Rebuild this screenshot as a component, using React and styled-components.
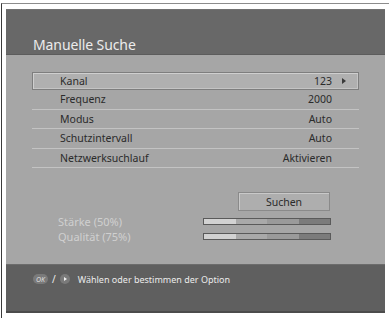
import React from "react";
import styled, { createGlobalStyle } from "styled-components";

const Global = createGlobalStyle`
  html, body { margin: 0; padding: 0; background: #ffffff; }
  body { font-family: "Noto Sans", "DejaVu Sans", Verdana, sans-serif; }
`;

const Frame = styled.div`
  width: 388px;
  height: 315px;
  margin-top: 3px;
  margin-left: 1px;
  border-top: 1px solid #8c8c8c;
  border-left: 1px solid #3a3a3a;
  padding: 5px 0 0 4px;
  box-sizing: border-box;
`;

const Screen = styled.div`
  width: 379px;
  height: 304px;
  display: flex;
  flex-direction: column;
  background: #a6a6a6;
  border-bottom: 2px solid #4c4c4c;
  box-sizing: border-box;
`;

const Header = styled.div`
  height: 46px;
  flex: none;
  background: #686868;
  border-top: 1px solid #727272;
  border-bottom: 1px solid #5c5c5c;
  box-sizing: border-box;
  display: flex;
  align-items: flex-end;
  padding: 0 0 0 27px;
`;

const Title = styled.div`
  color: #ececec;
  font-size: 14px;
  letter-spacing: -0.1px;
`;

const Body = styled.div`
  flex: 1;
  display: flex;
  flex-direction: column;
  padding: 17px 26px 0 26px;
`;

const List = styled.div`
  display: flex;
  flex-direction: column;
`;

const Row = styled.div`
  position: relative;
  height: ${(p) => (p.$active ? "18px" : "19.5px")};
  box-sizing: border-box;
  display: flex;
  align-items: center;
  justify-content: space-between;
  padding: 0 27px 0 28px;
  font-size: 10.5px;
  color: #2b2b2b;
  ${(p) =>
    p.$active
      ? `
    background: #b0b0b0;
    border: 1px solid #7e7e7e;
    box-shadow: inset 1px 1px 0 #cfcfcf, inset -1px -1px 0 #c4c4c4;
    padding: 0 26px 0 27px;
  `
      : `
    border-bottom: 1px solid #c3c3c3;
  `}
`;

const Arrow = styled.span`
  position: absolute;
  right: 12px;
  top: 50%;
  margin-top: -3.5px;
  width: 0;
  height: 0;
  border-top: 3.5px solid transparent;
  border-bottom: 3.5px solid transparent;
  border-left: 4px solid #3a3a3a;
`;

const ButtonRow = styled.div`
  display: flex;
  justify-content: flex-end;
  padding-right: 29px;
  margin-top: 24px;
`;

const Button = styled.div`
  width: 92px;
  height: 19px;
  box-sizing: border-box;
  background: #aeaeae;
  border: 1px solid #8a8a8a;
  box-shadow: inset 1px 1px 0 #c9c9c9;
  display: flex;
  align-items: center;
  justify-content: center;
  font-size: 10.5px;
  color: #2b2b2b;
`;

const Signals = styled.div`
  display: flex;
  flex-direction: column;
  gap: 3px;
  margin-top: 4px;
  padding: 0 28px 0 26px;
`;

const SignalRow = styled.div`
  height: 12px;
  display: flex;
  align-items: center;
  justify-content: space-between;
`;

const SignalLabel = styled.span`
  font-size: 11px;
  color: #d0d0d0;
`;

const Bar = styled.div`
  width: 128px;
  height: 7px;
  box-sizing: border-box;
  border: 1px solid #5a5a5a;
  display: grid;
  grid-template-columns: repeat(4, 1fr);
`;

const Seg = styled.div`
  background: ${(p) => p.$c};
`;

const Footer = styled.div`
  height: 47px;
  flex: none;
  background: #5f5f5f;
  border-top: 1px solid #6c6c6c;
  box-sizing: border-box;
  display: flex;
  align-items: flex-start;
  padding: 7px 0 0 27px;
  gap: 4px;
  color: #ebebeb;
  font-size: 9px;
`;

const OkBadge = styled.span`
  display: inline-flex;
  align-items: center;
  justify-content: center;
  width: 15px;
  height: 10px;
  margin-top: 2px;
  border-radius: 5px;
  background: #7a7a7a;
  color: #dedede;
  font-size: 7px;
  font-style: italic;
`;

const Slash = styled.span`
  font-size: 10px;
`;

const RoundIcon = styled.span`
  position: relative;
  display: inline-block;
  width: 10px;
  height: 10px;
  margin-top: 2px;
  border-radius: 50%;
  background: #7a7a7a;
  &::after {
    content: "";
    position: absolute;
    left: 4px;
    top: 2.5px;
    border-top: 2.5px solid transparent;
    border-bottom: 2.5px solid transparent;
    border-left: 3px solid #f0f0f0;
  }
`;

const Hint = styled.span`
  margin-left: 4px;
  margin-top: 1px;
`;

const rows = [
  ["Kanal", "123"],
  ["Frequenz", "2000"],
  ["Modus", "Auto"],
  ["Schutzintervall", "Auto"],
  ["Netzwerksuchlauf", "Aktivieren"],
];

const segs = ["#d2d2d2", "#a9a9a9", "#9a9a9a", "#7b7b7b"];

export default function App() {
  return (
    <>
      <Global />
      <Frame>
        <Screen>
          <Header>
            <Title>Manuelle Suche</Title>
          </Header>
          <Body>
            <List>
              {rows.map(([k, v], i) => (
                <Row key={k} $active={i === 0}>
                  <span>{k}</span>
                  <span>{v}</span>
                  {i === 0 && <Arrow />}
                </Row>
              ))}
            </List>
            <ButtonRow>
              <Button>Suchen</Button>
            </ButtonRow>
            <Signals>
              {["Stärke (50%)", "Qualität (75%)"].map((l) => (
                <SignalRow key={l}>
                  <SignalLabel>{l}</SignalLabel>
                  <Bar>
                    {segs.map((c) => (
                      <Seg key={c} $c={c} />
                    ))}
                  </Bar>
                </SignalRow>
              ))}
            </Signals>
          </Body>
          <Footer>
            <OkBadge>OK</OkBadge>
            <Slash>/</Slash>
            <RoundIcon />
            <Hint>Wählen oder bestimmen der Option</Hint>
          </Footer>
        </Screen>
      </Frame>
    </>
  );
}
